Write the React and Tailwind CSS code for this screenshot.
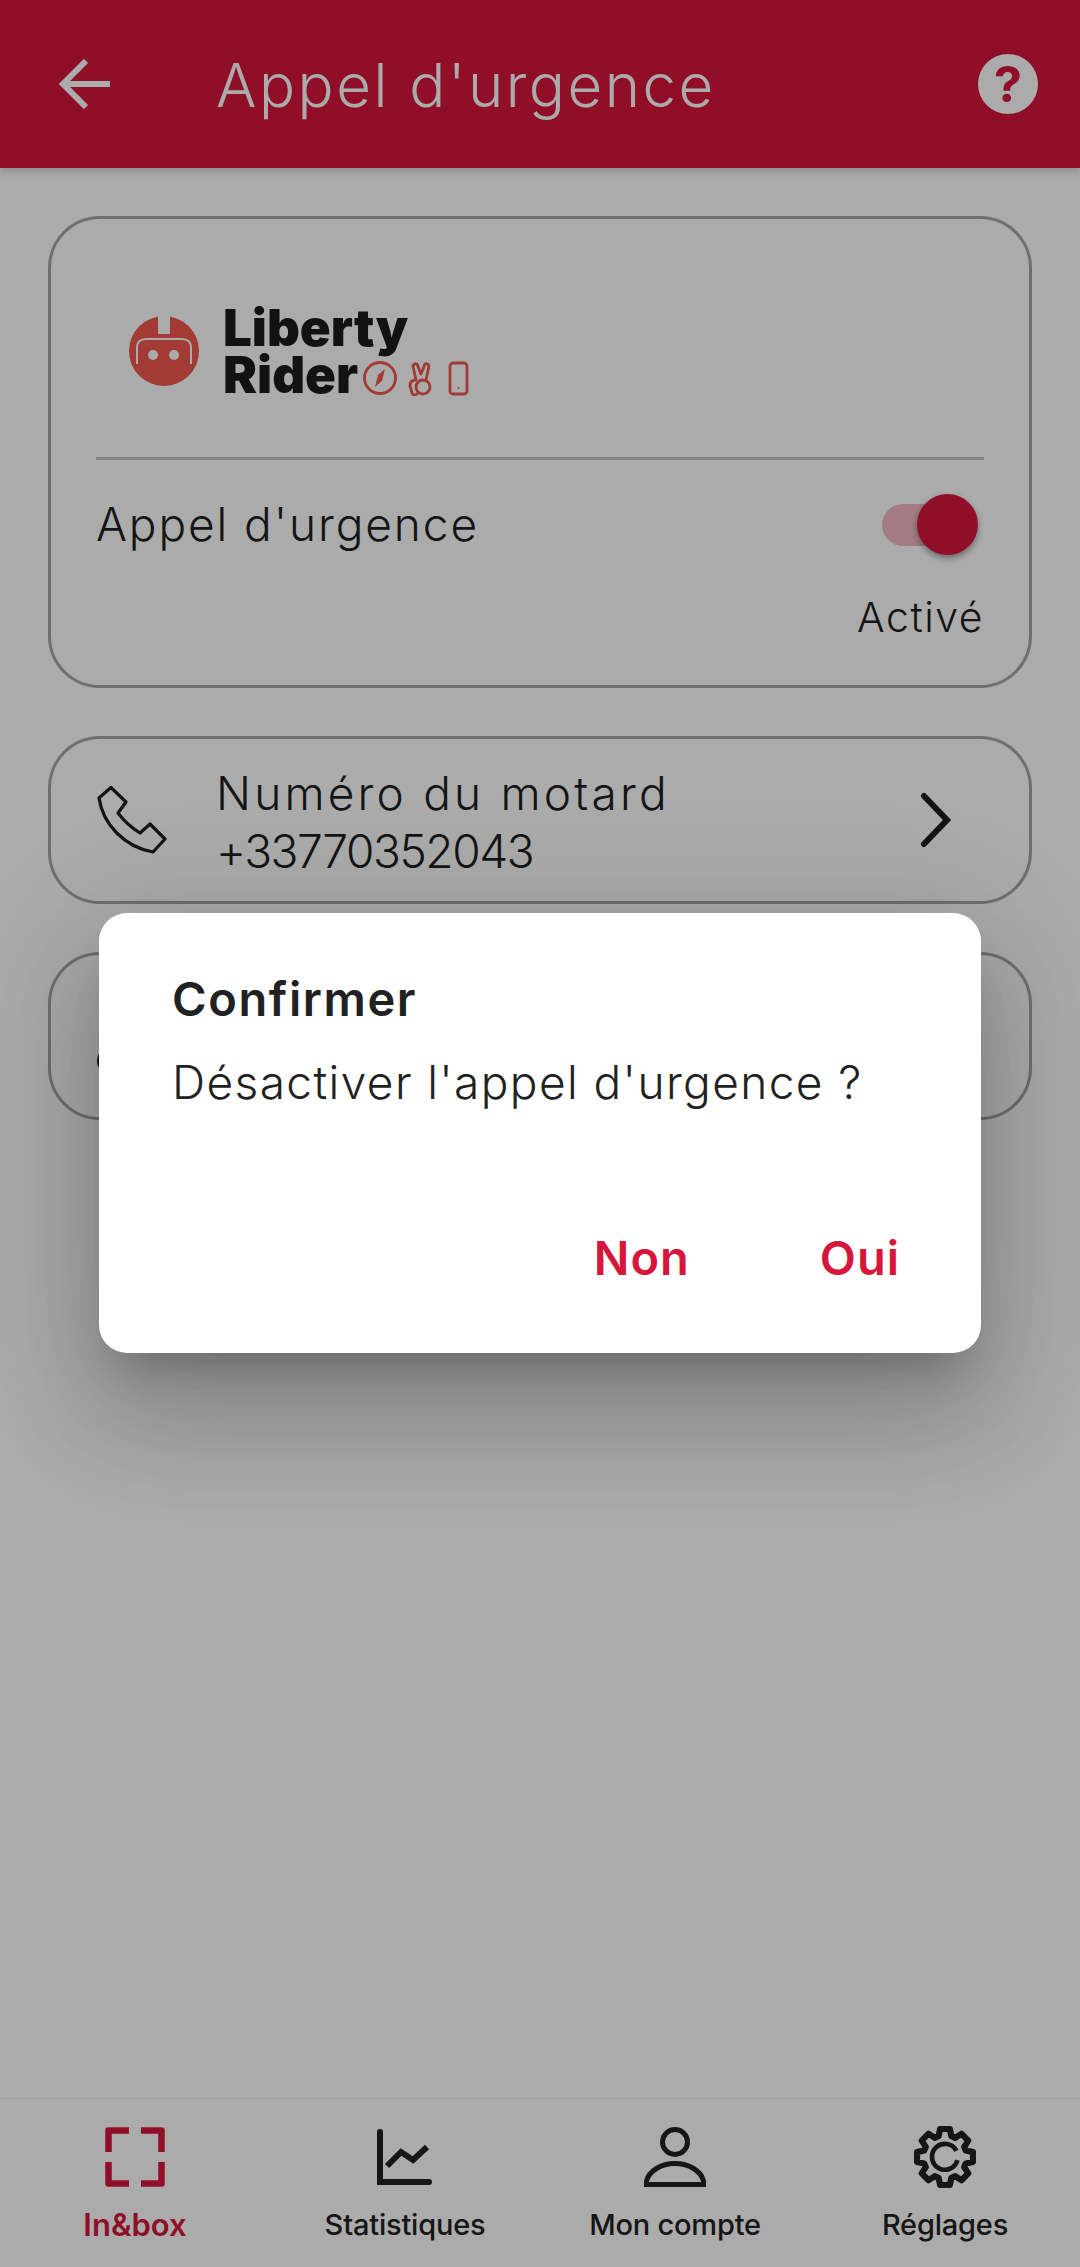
import React from 'react';

const gearPath = () => {
  const cx = 30;
  const cy = 30;
  let d = '';
  for (let i = 0; i < 8; i++) {
    const a = (i * Math.PI) / 4 - Math.PI / 2;
    const pts = [
      [-0.3, 21],
      [-0.17, 27.5],
      [0.17, 27.5],
      [0.3, 21],
    ];
    pts.forEach(([o, r], j) => {
      const x = (cx + r * Math.cos(a + o)).toFixed(1);
      const y = (cy + r * Math.sin(a + o)).toFixed(1);
      d += `${i === 0 && j === 0 ? 'M' : 'L'}${x} ${y} `;
    });
  }
  return d + 'Z';
};

const LibertyLogo = () => (
  <div className="flex items-center">
    <svg width="70" height="70" viewBox="0 0 70 70" className="ml-[33px]">
      <circle cx="35" cy="35" r="35" fill="#f0594e" />
      <rect x="29" y="-2" width="12" height="20" fill="#ffffff" />
      <path d="M8 48 V32 Q8 23 17 23 H53 Q62 23 62 32 V48" fill="none" stroke="#ffffff" strokeWidth="2" />
      <circle cx="24" cy="39" r="5" fill="#ffffff" />
      <circle cx="45" cy="39" r="5" fill="#ffffff" />
    </svg>
    <div className="ml-[24px] relative font-black text-[#1c1c1c] text-[51px] leading-[47px] font-[Inter]">
      <div>Liberty</div>
      <div className="flex items-center">
        Rider
        <svg width="110" height="36" viewBox="0 0 110 36" fill="none" stroke="#f0594e" strokeWidth="2.8" className="ml-[4px] mt-[6px]">
          <circle cx="18" cy="18" r="15.5" />
          <path d="M23 9 L20 21 L13 27 L16 15 Z" fill="#f0594e" stroke="none" />
          <path d="M54 20 L51 6 Q52 3 55 4 L59 14 L63 4 Q66 3 67 6 L64 20" strokeLinejoin="round" />
          <circle cx="61" cy="27" r="7" />
          <path d="M54 20 Q48 20 48 26 L50 33 Q51 36 55 34" strokeLinecap="round" />
          <rect x="88" y="3" width="17" height="31" rx="3" />
          <circle cx="96.5" cy="28" r="1" fill="#f0594e" stroke="none" />
        </svg>
      </div>
    </div>
  </div>
);

const PhoneIcon = () => (
  <svg width="70" height="70" viewBox="0 0 70 70" fill="none" stroke="#1f1f1f" strokeWidth="3.2" strokeLinejoin="round">
    <path d="M2 13 L14 2.5 L29 17 L21 28 Q30 40 43 48 L53 39 L68 54 L56 67 C28 62 6 40 2 13 Z" />
  </svg>
);

const Chevron = () => (
  <svg width="32" height="56" viewBox="0 0 32 56" fill="none" stroke="#1f1f1f" strokeWidth="6" strokeLinecap="round">
    <path d="M4 4 L27 28 L4 52" />
  </svg>
);

const InboxIcon = () => (
  <svg width="60" height="60" viewBox="0 0 60 60" fill="none" stroke="#d7163c" strokeWidth="6.5" strokeLinejoin="round">
    <path d="M24 3.5 H3.5 V25 M36 3.5 H56.5 V25 M3.5 35 V56.5 H24 M56.5 35 V56.5 H36" />
  </svg>
);

const StatsIcon = () => (
  <svg width="56" height="56" viewBox="0 0 56 56" fill="none" stroke="#222222" strokeWidth="6" strokeLinecap="round">
    <path d="M3 3 V53 H52" />
    <path d="M10 37 L24 23 L36 31 L50 18" strokeLinecap="butt" />
  </svg>
);

const UserIcon = () => (
  <svg width="62" height="60" viewBox="0 0 62 60" fill="none" stroke="#222222" strokeWidth="5">
    <circle cx="31" cy="15" r="12.5" />
    <path d="M2.5 57.5 V54 C5 44 17 36.5 31 36.5 C45 36.5 57 44 59.5 54 V57.5 Z" />
  </svg>
);

const GearIcon = () => (
  <svg width="62" height="62" viewBox="0 0 60 60" fill="none" stroke="#222222" strokeWidth="6" strokeLinejoin="round">
    <path d={gearPath()} />
    <path d="M41 24 A12.5 12.5 0 1 0 42 33" strokeWidth="4.5" />
  </svg>
);

const navItems = [
  { label: 'In&box', icon: <InboxIcon />, active: true },
  { label: 'Statistiques', icon: <StatsIcon /> },
  { label: 'Mon compte', icon: <UserIcon /> },
  { label: 'Réglages', icon: <GearIcon /> },
];

export default function App() {
  return (
    <div className="relative w-[1080px] h-[2267px] flex flex-col overflow-hidden bg-white font-[Inter] text-[#1f1f1f]">
      <header className="h-[168px] bg-[#d7163c] flex items-center shrink-0 shadow-[0_3px_8px_rgba(0,0,0,0.2)] z-10">
        <svg width="52" height="50" viewBox="0 0 52 50" fill="none" stroke="#ffffff" strokeWidth="6" className="ml-[59px]">
          <path d="M27 2 L4 25 L27 48 M4 25 H51" />
        </svg>
        <h1 className="ml-[105px] mt-[2px] text-[60px] font-light text-white tracking-[2.5px]">Appel d'urgence</h1>
        <div className="ml-auto mr-[42px] w-[60px] h-[60px] rounded-full bg-white flex items-center justify-center text-[#d7163c] text-[50px] font-bold">?</div>
      </header>

      <main className="flex-1 px-[48px] pt-[48px] flex flex-col gap-[48px]">
        <section className="h-[472px] rounded-[52px] border-[3px] border-[#a6a6a6] px-[45px] pt-[85px]">
          <LibertyLogo />
          <div className="mt-[59px] h-[3px] bg-[#c4c4c4]" />
          <div className="mt-[30px] flex items-center justify-between">
            <span className="text-[46px] font-light tracking-[1.9px]">Appel d'urgence</span>
            <div className="relative w-[96px] h-[61px] mr-[6px] flex items-center">
              <div className="w-[84px] h-[42px] rounded-full bg-[#d7163c]/30" />
              <div className="absolute right-0 top-0 w-[61px] h-[61px] rounded-full bg-[#d7163c] shadow-[0_3px_6px_rgba(0,0,0,0.4)]" />
            </div>
          </div>
          <div className="mt-[28px] text-right text-[41px] font-light tracking-[1.5px]">Activé</div>
        </section>

        <section className="h-[168px] rounded-[52px] border-[3px] border-[#a6a6a6] flex items-center pl-[46px] pr-[77px]">
          <PhoneIcon />
          <div className="ml-[49px] pt-[3px] text-[46px] leading-[58px] font-light">
            <div className="tracking-[3.2px]">Numéro du motard</div>
            <div className="tracking-[-1.4px]">+33770352043</div>
          </div>
          <div className="ml-auto"><Chevron /></div>
        </section>

        <section className="h-[168px] rounded-[52px] border-[3px] border-[#a6a6a6] flex items-center pl-[46px]">
          <div className="mt-[50px] w-[26px] h-[26px] rounded-full bg-[#1f1f1f]" />
        </section>
      </main>

      <nav className="h-[169px] shrink-0 grid grid-cols-4 border-t-[1px] border-[#f0f0f0] pt-[26px]">
        {navItems.map((item) => (
          <div key={item.label} className="flex flex-col items-center">
            <div className="h-[64px] flex items-center">{item.icon}</div>
            <span className={item.active ? 'mt-[16px] text-[31px] leading-[40px] font-semibold text-[#d7163c]' : 'mt-[16px] text-[29px] leading-[40px] font-medium text-[#222222] tracking-[-0.2px]'}>{item.label}</span>
          </div>
        ))}
      </nav>

      <div className="absolute inset-0 z-20 bg-black/33 flex items-center justify-center pb-[2px]">
        <div className="w-[882px] h-[440px] rounded-[28px] bg-white px-[73px] pt-[56px] relative shadow-[0_66px_105px_8px_rgba(0,0,0,0.14),0_25px_126px_22px_rgba(0,0,0,0.12),0_30px_41px_-19px_rgba(0,0,0,0.2)]">
          <h2 className="text-[47px] leading-[60px] font-semibold text-[#212121] tracking-[1.6px]">Confirmer</h2>
          <p className="mt-[23px] text-[46px] leading-[60px] font-light text-[#212121] tracking-[1.4px]">Désactiver l'appel d'urgence ?</p>
          <div className="absolute right-[81px] bottom-[65px] flex gap-[130px] text-[47px] tracking-[1px] font-semibold text-[#d7163c] leading-[60px]">
            <span>Non</span>
            <span>Oui</span>
          </div>
        </div>
      </div>
    </div>
  );
}
